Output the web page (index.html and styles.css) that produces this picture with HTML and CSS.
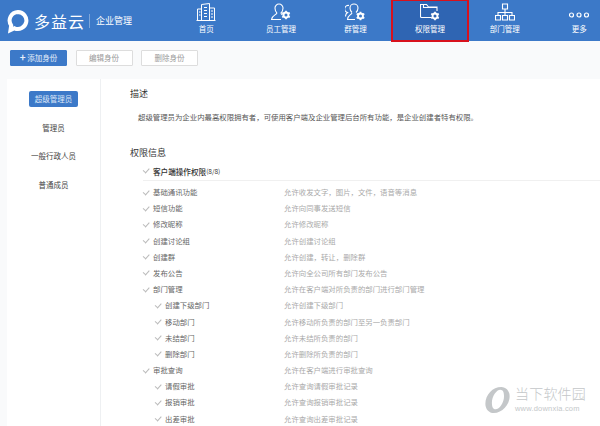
FILE: index.html
```html
<!DOCTYPE html>
<html lang="zh-cmn-Hans">
<head>
    <meta charset="UTF-8">
    <title>权限管理</title>
    <link rel="stylesheet" href="styles.css">
</head>
<body>
    <svg class="defs">
        <defs>
            <g id="gear">
                <circle cx="0" cy="0" r="2.6" fill="none" stroke="#fff" stroke-width="2"/>
                <path d="M0-4.6V-3M0 3V4.6M-4 -2.3L-2.6-1.5M2.6 1.5L4 2.3M-4 2.3L-2.6 1.5M2.6-1.5L4-2.3" stroke="#fff" stroke-width="1.8" fill="none"/>
            </g>
        </defs>
    </svg>
    <header class="header">
        <div class="brand">
            <svg class="brand-logo" width="24" height="26" viewBox="0 0 24 26">
                <path d="M13 4a8.500 8.500 0 1 1-3.500 16.300l-4 1.900.7-4.800A8.500 8.500 0 0 1 13 4z" fill="none" stroke="#fff" stroke-width="4"/>
            </svg>
            <span class="brand-name">多益云</span>
            <span class="brand-sub">企业管理</span>
        </div>
        <nav class="nav">
            <a class="nav-item">
                <svg width="20" height="18" viewBox="0 0 20 18" fill="none" stroke="#fff" stroke-width="1">
                    <path d="M5.500 17V1.500L13.500 .5V17M13.500 5H18.500V17M5.500 6H1.500V17M.5 17.500H19.500"/>
                    <path d="M8 4.500H11M8 7.500H11M8 10.500H11M8 13.500H11M3 9H4.500M3 12H4.500M15 8H17M15 11H17M15 14H17"/>
                </svg>
                <span>首页</span>
            </a>
            <a class="nav-item">
                <svg width="20" height="18" viewBox="0 0 20 18" fill="none" stroke="#fff" stroke-width="1.100">
                    <path d="M8 1a4 4 0 0 1 4 4.300c0 2-1 3.700-2 4.700 0 1 .6 1.500 1.500 2M6 10c-1 2-5 2.500-5.500 6.500H10"/>
                    <path d="M8 1a4 4 0 0 0-4 4.300c0 2 1 3.700 2 4.700"/>
                    <use href="#gear" transform="translate(15 12) scale(.95)"/>
                </svg>
                <span>员工管理</span>
            </a>
            <a class="nav-item">
                <svg width="20" height="18" viewBox="0 0 20 18" fill="none" stroke="#fff" stroke-width="1.100">
                    <path d="M9 1a4 4 0 0 1 4 4c0 2-1 3.500-2 4.500M7 10c-1 2-4 2-4.500 6.500H10"/>
                    <path d="M9 1a4 4 0 0 0-4 4c0 2 1 3.500 2 4.500"/>
                    <path d="M4 2.500A3.500 3.500 0 0 0 2.500 9.500C1 10.500 .5 12 .5 13.500"/>
                    <use href="#gear" transform="translate(15.500 13) scale(.95)"/>
                </svg>
                <span>群管理</span>
            </a>
            <a class="nav-item is-active">
                <svg width="20" height="18" viewBox="0 0 20 18" fill="none" stroke="#fff" stroke-width="1.100">
                    <path d="M11 14.500H1.500a1 1 0 0 1-1-1V1.500h6l2 2.500h8.500V8"/>
                    <path d="M3.500 1.500V4.500H17"/>
                    <use href="#gear" transform="translate(15 13) scale(.95)"/>
                </svg>
                <span>权限管理</span>
            </a>
            <a class="nav-item">
                <svg width="20" height="18" viewBox="0 0 20 18" fill="none" stroke="#fff" stroke-width="1.100">
                    <path d="M7.500 1H12.500V6H7.500zM.5 12.500H5.500V17H.5zM7.500 12.500H12.500V17H7.500zM14.500 12.500H19.500V17H14.500z"/>
                    <path d="M10 6V12.500M3 12.500V9.500H17V12.500"/>
                </svg>
                <span>部门管理</span>
            </a>
            <a class="nav-item">
                <svg width="20" height="18" viewBox="0 0 20 18" fill="none" stroke="#fff" stroke-width="1.200">
                    <circle cx="2.500" cy="12" r="2"/>
                    <circle cx="10" cy="12" r="2"/>
                    <circle cx="17.500" cy="12" r="2"/>
                </svg>
                <span>更多</span>
            </a>
        </nav>
    </header>

    <div class="toolbar">
        <button class="btn btn-primary"><b>+</b> 添加身份</button>
        <button class="btn">编辑身份</button>
        <button class="btn">删除身份</button>
    </div>

    <div class="panel">
        <aside class="side">
            <a class="side-item is-current">超级管理员</a>
            <a class="side-item">管理员</a>
            <a class="side-item">一般行政人员</a>
            <a class="side-item">普通成员</a>
        </aside>
        <main class="content">
            <h2 class="title">描述</h2>
            <p class="intro">超级管理员为企业内最高权限拥有者，可使用客户端及企业管理后台所有功能，是企业创建者特有权限。</p>
            <h2 class="title title-perm">权限信息</h2>
            <div class="group-head"><i class="check"></i><b>客户端操作权限</b><small>(8/8)</small></div>
            <ul class="perm-list">
                <li class="perm"><span class="perm-name"><i class="check"></i>基础通讯功能</span><span class="perm-desc">允许收发文字，图片，文件，语音等消息</span></li>
                <li class="perm"><span class="perm-name"><i class="check"></i>短信功能</span><span class="perm-desc">允许向同事发送短信</span></li>
                <li class="perm"><span class="perm-name"><i class="check"></i>修改昵称</span><span class="perm-desc">允许修改昵称</span></li>
                <li class="perm"><span class="perm-name"><i class="check"></i>创建讨论组</span><span class="perm-desc">允许创建讨论组</span></li>
                <li class="perm"><span class="perm-name"><i class="check"></i>创建群</span><span class="perm-desc">允许创建，转让，删除群</span></li>
                <li class="perm"><span class="perm-name"><i class="check"></i>发布公告</span><span class="perm-desc">允许向全公司所有部门发布公告</span></li>
                <li class="perm"><span class="perm-name"><i class="check"></i>部门管理</span><span class="perm-desc">允许在客户端对所负责的部门进行部门管理</span></li>
                <li class="perm sub"><span class="perm-name"><i class="check"></i>创建下级部门</span><span class="perm-desc">允许创建下级部门</span></li>
                <li class="perm sub"><span class="perm-name"><i class="check"></i>移动部门</span><span class="perm-desc">允许移动所负责的部门至另一负责部门</span></li>
                <li class="perm sub"><span class="perm-name"><i class="check"></i>未结部门</span><span class="perm-desc">允许未结所负责的部门</span></li>
                <li class="perm sub"><span class="perm-name"><i class="check"></i>删除部门</span><span class="perm-desc">允许删除所负责的部门</span></li>
                <li class="perm"><span class="perm-name"><i class="check"></i>审批查询</span><span class="perm-desc">允许在客户端进行审批查询</span></li>
                <li class="perm sub"><span class="perm-name"><i class="check"></i>请假审批</span><span class="perm-desc">允许查询请假审批记录</span></li>
                <li class="perm sub"><span class="perm-name"><i class="check"></i>报销审批</span><span class="perm-desc">允许查询报销审批记录</span></li>
                <li class="perm sub"><span class="perm-name"><i class="check"></i>出差审批</span><span class="perm-desc">允许查询出差审批记录</span></li>
            </ul>
        </main>
    </div>

    <div class="watermark">
        <svg width="27" height="28" viewBox="0 0 28 30">
            <path d="M18 1C9 1 1 9 1 19c0 6 4 10 9 10 9 0 17-9 17-18C27 5 23 1 18 1zM12 25c-3 0-4-3-4-7C8 11 13 4 17 4c3 0 4 3 4 7 0 7-5 14-9 14z" fill="#c4c7c9"/>
        </svg>
        <div class="watermark-text">
            <strong>当下软件园</strong>
            <span>www.downxia.com</span>
        </div>
    </div>
</body>
</html>
```

FILE: styles.css
```css
html,body{
    width: 100%;
    height: 100%;
    margin: 0;
    overflow: hidden;
}
body{
    position: relative;
    background-color: #f9fafb;
    font-family: "Noto Sans CJK SC", "Liberation Sans", sans-serif;
    color: #555;
}
.defs{
    display: none;
}

/* header */
.header{
    display: flex;
    height: 41px;
    background-color: #3c79c8;
    color: #fff;
}
.brand{
    display: flex;
    flex: none;
    align-items: center;
    width: 169px;
    padding-left: 5px;
    box-sizing: border-box;
}
.brand-name{
    margin-left: 5px;
    font-size: 16px;
    font-weight: 400;
    letter-spacing: 1px;
    white-space: nowrap;
}
.brand-sub{
    margin-left: 4px;
    padding-left: 6px;
    border-left: 1px solid #7ea6da;
    font-size: 9px;
    line-height: 14px;
    white-space: nowrap;
}
.nav{
    display: flex;
    flex: 1;
}
.nav-item{
    position: relative;
    display: flex;
    flex: none;
    flex-direction: column;
    align-items: center;
    width: 74.600px;
    padding-top: 3px;
    box-sizing: border-box;
    font-size: 7.500px;
    line-height: 12px;
    white-space: nowrap;
}
.nav-item span{
    margin-top: 2px;
}
.nav-item.is-active{
    background-color: #2f65b3;
}
.nav-item.is-active:after{
    content: "";
    position: absolute;
    top: 0;
    left: -2px;
    right: -2px;
    bottom: -1px;
    border: 2px solid #d8111c;
    border-top-width: 1px;
}

/* toolbar */
.toolbar{
    display: flex;
    gap: 8.500px;
    height: 38px;
    padding: 9px 0 0 10px;
    box-sizing: border-box;
}
.btn{
    width: 57px;
    height: 16px;
    padding: 0;
    border: 1px solid #ddd;
    border-radius: 1px;
    background-color: #fff;
    font: 7.500px/14px "Noto Sans CJK SC", sans-serif;
    color: #999;
}
.btn b{
    font-size: 10px;
    line-height: 10px;
}
.btn-primary{
    border-color: #3c79c8;
    background-color: #3c79c8;
    color: #e6eefa;
}

/* panel */
.panel{
    display: flex;
    height: 347px;
    margin-left: 7px;
    background-color: #fff;
}
.side{
    display: flex;
    flex: none;
    flex-direction: column;
    align-items: center;
    width: 94px;
    padding: 12px 0 0 0;
    box-sizing: border-box;
    border-right: 1px solid #eef0f2;
    font-size: 7.500px;
}
.side-item{
    width: 49px;
    height: 16px;
    margin-bottom: 12.700px;
    border-radius: 2px;
    line-height: 16px;
    text-align: center;
    white-space: nowrap;
    color: #444;
}
.side-item.is-current{
    background-color: #3c79c8;
    color: #dce8f8;
}
.content{
    flex: 1;
    padding-left: 29px;
    min-width: 0;
}
.title{
    margin: 8px 0 0 0;
    font-size: 9px;
    line-height: 13px;
    font-weight: 400;
    color: #333;
}
.title-perm{
    margin-top: 23px;
}
.intro{
    margin: 10px 0 0 8px;
    font-size: 7.400px;
    line-height: 13px;
    white-space: nowrap;
    color: #555;
}
.group-head{
    display: flex;
    align-items: center;
    height: 14px;
    margin: 5px 0 0 13px;
    padding-bottom: 2px;
    border-bottom: 1px solid #f0f0f0;
    font-size: 7.600px;
    color: #333;
}
.group-head b{
    font-weight: 500;
}
.group-head small{
    font-size: 6.500px;
}
.check{
    display: inline-block;
    width: 5px;
    height: 2.500px;
    margin: 0 4px 2px 0;
    border-left: 1px solid #bbb;
    border-bottom: 1px solid #bbb;
    transform: rotate(-48deg);
}
.perm-list{
    margin: 3px 0 0 13px;
    padding: 0;
    list-style: none;
}
.perm{
    display: grid;
    grid-template-columns: 141px 1fr;
    height: 16.200px;
    font-size: 7.400px;
    line-height: 16.200px;
    white-space: nowrap;
}
.perm-name{
    color: #666;
}
.perm-desc{
    color: #aaa;
}
.sub .perm-name{
    padding-left: 12px;
}

/* watermark */
.watermark{
    position: absolute;
    right: 14px;
    bottom: 12px;
    display: flex;
    align-items: center;
    gap: 4px;
    color: #c4c7c9;
}
.watermark-text{
    display: flex;
    flex-direction: column;
}
.watermark-text strong{
    font-size: 14px;
    line-height: 15px;
    font-weight: 300;
    letter-spacing: .2px;
}
.watermark-text span{
    margin-top: 2.500px;
    font: 7.500px/10px "Liberation Sans", sans-serif;
    letter-spacing: .2px;
}
```
